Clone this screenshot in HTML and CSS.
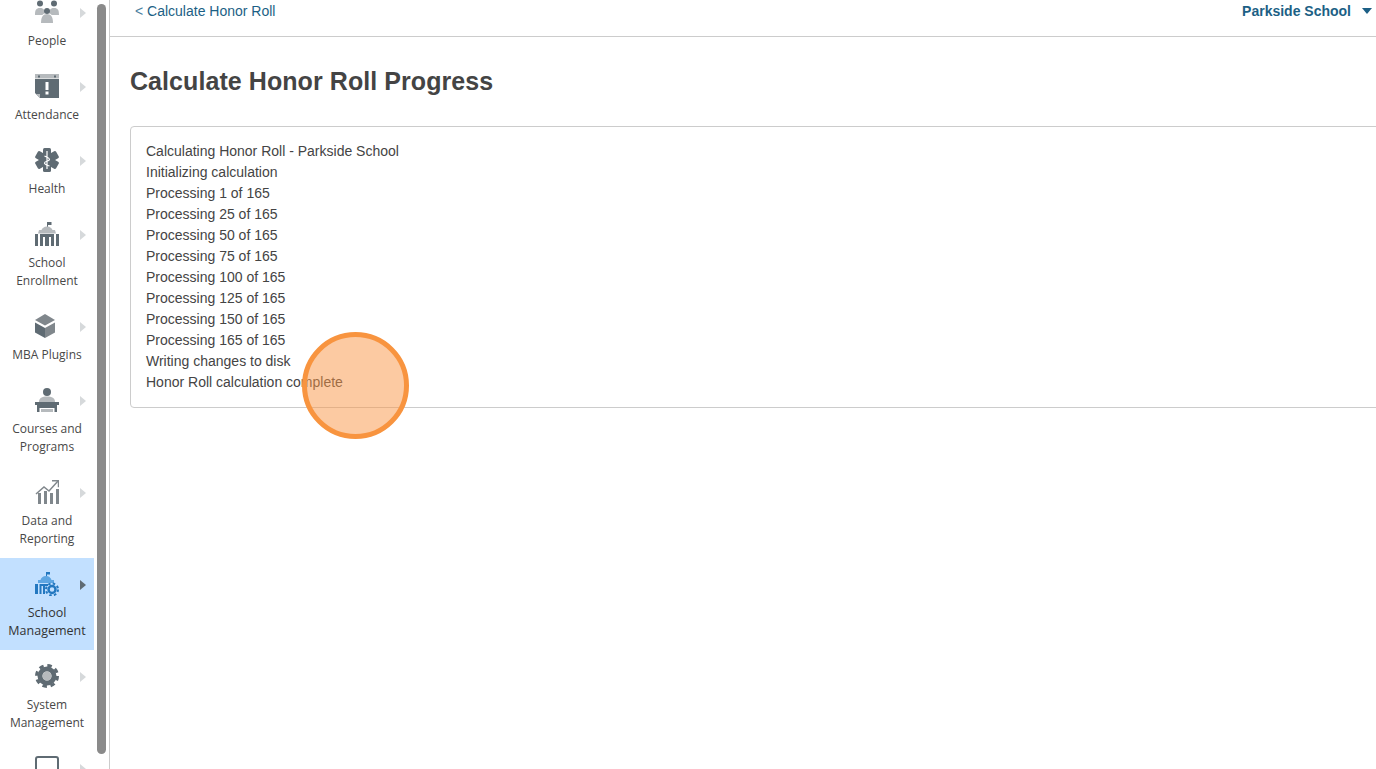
FILE: index.html
```html
<!DOCTYPE html>
<html lang="en">
<head>
  <meta charset="UTF-8" />
  <title>Calculate Honor Roll Progress</title>
  <link rel="stylesheet" href="styles.css">
</head>
<body>
  <aside class="sidebar">
    <nav class="nav">
      <a class="nav-item">
        <span class="nav-icon">
          <svg viewBox="0 0 24 24" width="24" height="24">
            <path class="lt" d="M0 15c0-5 1-7 5-7s5 2 5 7zM14 15c0-5 1-7 5-7s5 2 5 7z"/>
            <path class="wh" d="M5 24c0-7 2-11 7-11s7 4 7 11z"/>
            <path class="lt" d="M6 23c0-6 2-9 6-9s6 3 6 9z"/>
            <circle class="dk" cx="5" cy="3.500" r="3"/>
            <circle class="dk" cx="19" cy="3.500" r="3"/>
            <circle class="dk" cx="12" cy="11" r="3"/>
          </svg>
          <i class="arrow"></i>
        </span>
        <span class="nav-label">People</span>
      </a>
      <a class="nav-item">
        <span class="nav-icon">
          <svg viewBox="0 0 24 24" width="24" height="24">
            <path class="lt" d="M0 0h24v4.500H0z"/>
            <path class="dk" d="M3 1.500h2v2H3zM19 1.500h2v2h-2z"/>
            <path class="dk" d="M0 5h24v19H5l-5-5z"/>
            <path class="wh" d="M10.500 8h3v8h-3zM10.500 17.500h3v3h-3z"/>
            <path class="lt" d="M1 20h4v4z"/>
          </svg>
          <i class="arrow"></i>
        </span>
        <span class="nav-label">Attendance</span>
      </a>
      <a class="nav-item">
        <span class="nav-icon">
          <svg viewBox="0 0 24 24" width="24" height="24">
            <g class="dk">
              <rect x="8" y="0" width="8" height="24" rx="1.500"/>
              <rect x="8" y="0" width="8" height="24" rx="1.500" transform="rotate(60 12 12)"/>
              <rect x="8" y="0" width="8" height="24" rx="1.500" transform="rotate(120 12 12)"/>
            </g>
            <path class="line-wh" d="M12 3v18M9.500 8c3 1.500 5 1.500 5 3.500s-5 1.500-5 3.500 3 2 5 3"/>
          </svg>
          <i class="arrow"></i>
        </span>
        <span class="nav-label">Health</span>
      </a>
      <a class="nav-item">
        <span class="nav-icon">
          <svg viewBox="0 0 24 24" width="24" height="24">
            <path class="dk" d="M12 0h4.500v3H13v3h-1z"/>
            <path class="lt" d="M12 4.500c3 0 5 2 5.500 3.500H20l1 3.500H3L4 8h2.500C7 6.500 9 4.500 12 4.500z"/>
            <path class="dk" d="M0 12h3v12H0zM21 12h3v12h-3z"/>
            <path class="dk" d="M5 12h14v12h-3V15h-2v9h-4v-9H8v9H5z"/>
          </svg>
          <i class="arrow"></i>
        </span>
        <span class="nav-label">School<br>Enrollment</span>
      </a>
      <a class="nav-item">
        <span class="nav-icon">
          <svg viewBox="0 0 24 24" width="24" height="24">
            <path class="md" d="M10 0l10 6-10 5.500L0 6z"/>
            <path class="dk" d="M0 8.500l10 5.500v10L0 18.500z"/>
            <path class="md" d="M20 8.500L10 14v10l10-5.500z"/>
          </svg>
          <i class="arrow"></i>
        </span>
        <span class="nav-label">MBA Plugins</span>
      </a>
      <a class="nav-item">
        <span class="nav-icon">
          <svg viewBox="0 0 24 24" width="24" height="24">
            <circle class="dk" cx="12" cy="4" r="4"/>
            <path class="lt" d="M4 14c0-4 3-5.500 8-5.500s8 1.500 8 5.500z"/>
            <path class="dk" d="M0 14h24v3H0zM2 17h20v7h-2.500v-4h-15v4H2z"/>
            <path class="lt" d="M6 21h12v3H6z"/>
          </svg>
          <i class="arrow"></i>
        </span>
        <span class="nav-label">Courses and<br>Programs</span>
      </a>
      <a class="nav-item">
        <span class="nav-icon">
          <svg viewBox="0 0 24 24" width="24" height="24">
            <path class="md" d="M3 13h3v11H3zM9 11h3v13H9zM15 13h3v11h-3zM21 9h3v15h-3z"/>
            <path class="line-md" d="M1 14l8-7 5 4 9-10"/>
            <path class="line-md" d="M17 .700h6.500v6.500"/>
          </svg>
          <i class="arrow"></i>
        </span>
        <span class="nav-label">Data and<br>Reporting</span>
      </a>
      <a class="nav-item active">
        <span class="nav-icon">
          <svg viewBox="0 0 24 24" width="24" height="24">
            <path class="bl" d="M11 0h4v2.500h-3V5h-1z"/>
            <path class="bl-lt" d="M11 4c3 0 5 2 5.500 4H19v3H3V8h2.500C6 6 8 4 11 4z"/>
            <path class="bl" d="M0 12h3v10H0z"/>
            <path class="bl" d="M4.500 12H13v2h-3v8H8v-8H6.500v8h-2z"/>
            <circle class="gear-teeth" cx="17" cy="17.500" r="6"/>
            <circle class="gear-ring" cx="17" cy="17.500" r="3.500"/>
          </svg>
          <i class="arrow"></i>
        </span>
        <span class="nav-label">School<br>Management</span>
      </a>
      <a class="nav-item">
        <span class="nav-icon">
          <svg viewBox="0 0 24 24" width="24" height="24">
            <circle class="sys-teeth" cx="12" cy="12" r="10.500"/>
            <circle class="sys-ring" cx="12" cy="12" r="7"/>
            <circle class="lt" cx="12" cy="12" r="4.500"/>
          </svg>
          <i class="arrow"></i>
        </span>
        <span class="nav-label">System<br>Management</span>
      </a>
      <a class="nav-item">
        <span class="nav-icon">
          <svg viewBox="0 0 24 24" width="24" height="24">
            <rect class="line-dk" x="1" y="1" width="22" height="22" rx="2"/>
          </svg>
          <i class="arrow"></i>
        </span>
      </a>
    </nav>
    <div class="scroll-thumb"></div>
  </aside>

  <main class="main">
    <header class="topbar">
      <a class="back-link"><span class="back-mark">&lt;</span> Calculate Honor Roll</a>
      <a class="school-pick">Parkside School <i class="school-caret"></i></a>
    </header>
    <section class="content">
      <h1 class="page-title">Calculate Honor Roll Progress</h1>
      <div class="log-box">
        <div>Calculating Honor Roll - Parkside School</div>
        <div>Initializing calculation</div>
        <div>Processing 1 of 165</div>
        <div>Processing 25 of 165</div>
        <div>Processing 50 of 165</div>
        <div>Processing 75 of 165</div>
        <div>Processing 100 of 165</div>
        <div>Processing 125 of 165</div>
        <div>Processing 150 of 165</div>
        <div>Processing 165 of 165</div>
        <div>Writing changes to disk</div>
        <div>Honor Roll calculation complete</div>
      </div>
    </section>
  </main>

  <div class="click-marker"></div>
</body>
</html>
```

FILE: styles.css
```css
:root {
  --text: #444444;
  --link: #1c5f85;
  --line: #cccccc;
  --icon: #5f6b73;
  --icon-mid: #80878c;
  --icon-light: #b6babd;
}
* {
  box-sizing: border-box;
  margin: 0;
  padding: 0;
}
html, body {
  height: 100%;
  overflow: hidden;
}
body {
  display: flex;
  background: white;
  color: var(--text);
  font-family: 'Liberation Sans', Arial, sans-serif;
  font-size: 14px;
}

/* left nav */
.sidebar {
  position: relative;
  flex: 0 0 110px;
  height: 100%;
  overflow: hidden;
  border-right: 1px solid var(--line);
}
.nav {
  width: 94px;
  margin-top: -14px;
}
.nav-item {
  display: block;
  padding: 14px 0 10px;
  text-align: center;
}
.nav-item.active {
  background: #c2e0ff;
}
.nav-icon {
  position: relative;
  display: block;
  height: 24px;
  margin-bottom: 8px;
}
.nav-icon svg {
  display: block;
  margin: 0 auto;
}
.arrow {
  position: absolute;
  left: 80px;
  top: 8px;
  border-left: 6px solid #d6d9db;
  border-top: 5px solid transparent;
  border-bottom: 5px solid transparent;
}
.active .arrow {
  border-left-color: var(--icon);
}
.nav-label {
  display: block;
  font-family: 'Open Sans', sans-serif;
  font-size: 12px;
  line-height: 18px;
  color: #484848;
}
.active .nav-label {
  font-size: 12.5px;
  color: #333333;
}
.scroll-thumb {
  position: absolute;
  left: 97px;
  top: 4px;
  width: 9px;
  height: 750px;
  border-radius: 5px;
  background: #8a8a8a;
}

/* icon fills */
.dk { fill: var(--icon); }
.md { fill: var(--icon-mid); }
.lt { fill: var(--icon-light); }
.wh { fill: white; }
.bl { fill: #2378c0; }
.bl-lt { fill: #5ea6e2; }
.line-wh { fill: none; stroke: white; stroke-width: 1.2; }
.line-dk { fill: none; stroke: var(--icon); stroke-width: 2; }
.line-md { fill: none; stroke: var(--icon-mid); stroke-width: 1.500; }
.gear-teeth { fill: none; stroke: #2378c0; stroke-width: 2; stroke-dasharray: 2.500 2.212; }
.gear-ring { fill: #c2e0ff; stroke: #2378c0; stroke-width: 2.500; }
.sys-teeth { fill: none; stroke: var(--icon); stroke-width: 3; stroke-dasharray: 4.500 3.750; }
.sys-ring { fill: none; stroke: var(--icon); stroke-width: 5; }

/* main area */
.main {
  flex: 1;
  min-width: 0;
}
.topbar {
  display: flex;
  justify-content: space-between;
  height: 37px;
  padding: 3px 4px 0 25px;
  border-bottom: 1px solid var(--line);
  line-height: 16px;
}
.back-link {
  color: var(--link);
}
.back-mark {
  color: #4a7f9f;
}
.school-pick {
  display: flex;
  align-items: flex-start;
  gap: 11px;
  color: var(--link);
  font-weight: bold;
}
.school-caret {
  margin-top: 5px;
  border-top: 6px solid var(--link);
  border-left: 5px solid transparent;
  border-right: 5px solid transparent;
}
.content {
  padding: 29px 0 0 20px;
}
.page-title {
  font-size: 25px;
  line-height: 30px;
  font-weight: bold;
  letter-spacing: 0.07px;
  margin-bottom: 30px;
}
.log-box {
  margin-right: -10px;
  padding: 14px 15px;
  border: 1px solid var(--line);
  border-radius: 4px;
  line-height: 21px;
}

/* orange click highlight over the page */
.click-marker {
  position: absolute;
  left: 302px;
  top: 332px;
  width: 107px;
  height: 107px;
  border: 5px solid #f8943f;
  border-radius: 50%;
  background: rgba(250, 150, 70, 0.5);
}
```
